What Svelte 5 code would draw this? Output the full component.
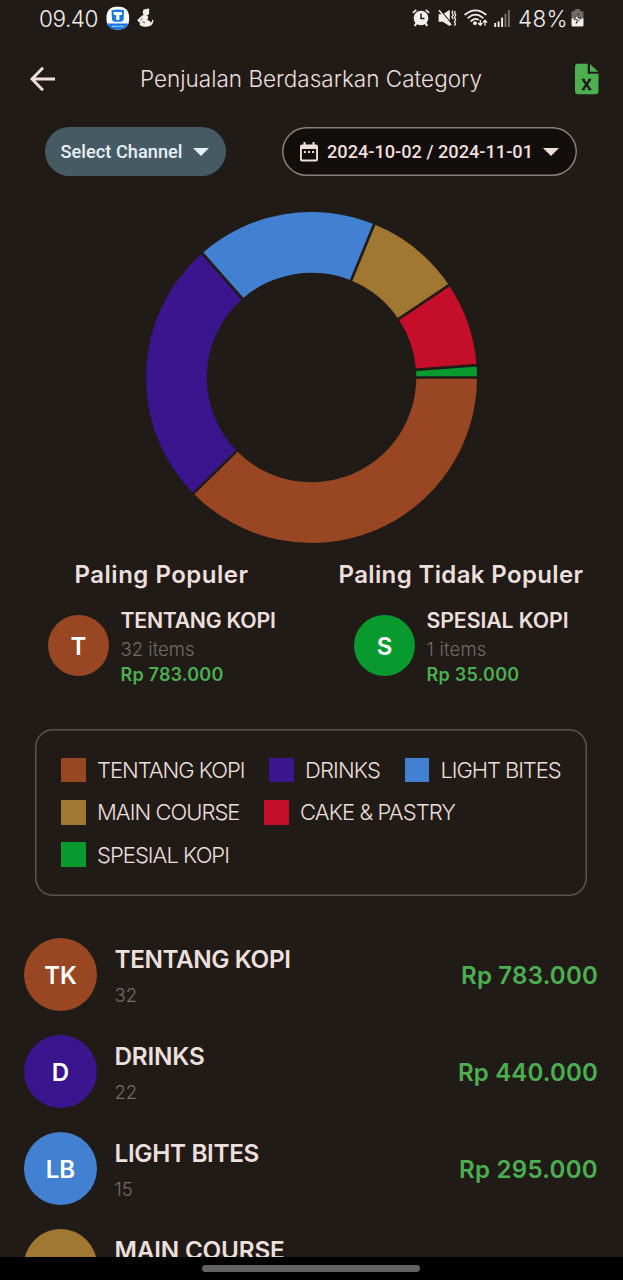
<script>
  const categories = [
    { name: 'TENTANG KOPI', initials: 'TK', qty: 32, total: 'Rp 783.000', color: '#984722', legend: 147.5, row: 176, amount: 137 },
    { name: 'DRINKS', initials: 'D', qty: 22, total: 'Rp 440.000', color: '#3b158d', legend: 75, row: 90, amount: 140 },
    { name: 'LIGHT BITES', initials: 'LB', qty: 15, total: 'Rp 295.000', color: '#4281d2', legend: 120, row: 144.5, amount: 139 },
    { name: 'MAIN COURSE', initials: 'MC', qty: 8, total: '', color: '#a17831', legend: 142.5, row: 170, amount: 0 },
    { name: 'CAKE & PASTRY', initials: 'CP', qty: 7, total: '', color: '#c50e2a', legend: 155, row: 0, amount: 0 },
    { name: 'SPESIAL KOPI', initials: 'SK', qty: 1, total: '', color: '#089a2e', legend: 132, row: 0, amount: 0 }
  ];
  const rows = categories.slice(0, 4);
  const highlights = [
    { title: 'Paling Populer', titleWidth: 174, name: 'TENTANG KOPI', nameWidth: 155, letter: 'T', items: '32 items', itemsWidth: 74, total: 'Rp 783.000', totalWidth: 103, color: '#984722' },
    { title: 'Paling Tidak Populer', titleWidth: 245, name: 'SPESIAL KOPI', nameWidth: 142, letter: 'S', items: '1 items', itemsWidth: 60, total: 'Rp 35.000', totalWidth: 93, color: '#089a2e' }
  ];

  const OUTER = 165.5;
  const INNER = 104.8;
  const sum = categories.reduce((s, c) => s + c.qty, 0);
  const at = (r, a) => `${(r * Math.cos(a)).toFixed(2)} ${(r * Math.sin(a)).toFixed(2)}`;

  let angle = 0;
  const slices = categories.map((c) => {
    const a = angle;
    const b = (angle += (c.qty / sum) * Math.PI * 2);
    const large = b - a > Math.PI ? 1 : 0;
    return {
      color: c.color,
      d: `M${at(OUTER, a)}A${OUTER} ${OUTER} 0 ${large} 1 ${at(OUTER, b)}L${at(INNER, b)}A${INNER} ${INNER} 0 ${large} 0 ${at(INNER, a)}Z`,
      gap: `M${at(INNER - 2, a)}L${at(OUTER + 2, a)}`
    };
  });

  // Tracks a label out or in so that it takes the given width.
  function fit(node, width) {
    const natural = node.getBoundingClientRect().width;
    node.style.letterSpacing = `${(width - natural) / node.textContent.length}px`;
  }
</script>

<div class="screen">
  <div class="status">
    <span class="clock"><span class="t" use:fit={59}>09.40</span></span>
    <svg class="app-badge" viewBox="0 0 24 24" width="24" height="24">
      <defs><clipPath id="badge"><rect x=".5" y=".8" width="22.6" height="22.6" rx="9" /></clipPath></defs>
      <g clip-path="url(#badge)">
        <rect width="24" height="24" fill="#fff" />
        <rect y="17.500" width="24" height="7" fill="#1677e8" />
        <path d="M5.500 4.300q6.300-1.500 12.600 0l-.5 9q-.2 2.400-2.600 2.400h-6.400q-2.400 0-2.600-2.400z" fill="#1677e8" />
        <path d="M7.600 6h8.400v3h-2.600v5h-3.200v-5h-2.600z" fill="#fff" />
        <path d="M6 20.300h12" stroke="#b6d8ff" stroke-width="1.300" stroke-dasharray="1.500 .5" />
      </g>
    </svg>
    <svg class="figure" viewBox="0 0 18 20" width="18" height="20">
      <circle cx="10" cy="4.300" r="3.200" fill="#f1eeec" /><circle cx="12" cy="1.900" r="1.300" fill="#f1eeec" />
      <path d="M7 7q5-.5 5.300 2l-1 3.300q3 .2 3.200 2.300 1.700-.3 1.700-2.800l1.200.3q0 5.200-4.500 6.200-5 1.300-8.200-.5-1.800-1.200-.8-3Q1.100 13.100 1.500 12q.4-1.200 5.500-5z" fill="#f1eeec" />
      <path d="M4.500 12l1.800-1.400M6.500 13.700l2.500 1.200" stroke="#211b18" stroke-width=".8" fill="none" />
    </svg>
    <span class="spacer"></span>
    <svg class="alarm" viewBox="0 0 18 18" width="18" height="18">
      <path d="M.8 3.900L4.300.9M17.200 3.900L13.700.9" stroke="#f1eeec" stroke-width="1.700" />
      <circle cx="9" cy="9" r="7.300" fill="#f1eeec" /><path d="M4.500 14L2.800 17M13.500 14l1.700 3" stroke="#f1eeec" stroke-width="2.200" />
      <path d="M9 4.600V9.500h3.500" fill="none" stroke="#211b18" stroke-width="1.500" />
    </svg>
    <svg class="mute" viewBox="0 0 19 18" width="19" height="18">
      <path d="M.6 5.300h4.200L11.800.8v16.400L4.800 12.700H.6z" fill="#f1eeec" />
      <path d="M2.200 1L13.600 14.600" stroke="#211b18" stroke-width="1.200" /><path d="M1 1.200L13.200 16" stroke="#f1eeec" stroke-width="1.500" />
      <path d="M15 1.500l-1 2 1.200 2.200-1.200 2.300 1.200 2.300M17.500 2l-1 1.800 1.200 2.200-1.200 2.300 1.200 2.300-1.200 2.300 1 2.200-1.200 1.500" fill="none" stroke="#f1eeec" stroke-width="1.300" />
    </svg>
    <svg class="wifi" viewBox="0 0 24 18" width="24" height="18">
      <g fill="none" stroke="#f1eeec" stroke-width="1.700" stroke-linecap="round"><path d="M1.200 5.500Q11.500-2.800 21.800 5.500" /><path d="M4.100 8.800Q11.500 2.600 18.900 8.800" /><path d="M7.200 12Q11 8.500 14 10.500" /></g>
      <circle cx="11" cy="14.200" r="1.900" fill="#f1eeec" />
      <path d="M16.300 11v5.200M14.200 14l2.100 2.300 2.100-2.300M21 16.700V11.500M18.900 13.600l2.100-2.300 2.100 2.300" fill="none" stroke="#f1eeec" stroke-width="1.300" />
    </svg>
    <svg class="signal" viewBox="0 0 16 17" width="16" height="17">
      <path d="M1.200 17v-4M4.600 17v-5.500M8.100 17V7.500" stroke="#f1eeec" stroke-width="1.900" />
      <path d="M11.500 17V3.500M14.900 17V0" stroke="#75716f" stroke-width="1.900" />
    </svg>
    <span class="percent"><span class="t" use:fit={50}>48%</span></span>
    <svg class="battery" viewBox="0 0 13 18" width="13" height="18">
      <path d="M4 0h5v2h2q1.500 0 1.500 1.500V10H.5V3.500Q.5 2 2 2h2z" fill="#6e6a68" /><path d="M.5 9.500h12v6.500q0 1.500-1.500 1.500H2Q.5 17.500.5 16z" fill="#f1eeec" />
      <path d="M7.500 4.500L3 10.500h3.300L5.200 14.500 10 9H6.800z" fill="#fff" stroke="#211b18" stroke-width=".8" />
    </svg>
  </div>

  <header>
    <svg class="back" viewBox="0 0 26 26" width="26" height="26"><path d="M13 1.700L2 13l11 11.300M2.200 13H25" fill="none" stroke="#f0dfdb" stroke-width="2.900" /></svg>
    <h1><span class="t" use:fit={342}>Penjualan Berdasarkan Category</span></h1>
    <svg class="excel" viewBox="0 0 24 32" width="24" height="32">
      <path d="M3 .8H12.700V10.800H23.500V28.300q0 3-3 3H3q-3 0-3-3V3.800q0-3 3-3z" fill="#4caf50" /><path d="M15 .9L23.300 8.800H15z" fill="#4caf50" />
      <path d="M8 16.500L15 26.500M15 16.500L8 26.500" stroke="#211b18" stroke-width="2.300" />
      <path d="M6.800 16.500h3.200M13.200 16.500h3M6.800 26.500h3M13.200 26.500h3.200" stroke="#211b18" stroke-width="1.600" />
    </svg>
  </header>

  <div class="filters">
    <button class="channel"><span class="t" use:fit={122}>Select Channel</span><i class="caret"></i></button>
    <button class="dates">
      <svg viewBox="0 0 18 20" width="18" height="20">
        <path d="M3.500 0h2v2.500h7V0h2v2.500H16q2 0 2 2V17.500q0 2-2 2H2q-2 0-2-2V4.500q0-2 2-2h1.500z" fill="#f0dfdb" /><path d="M1.900 7h14.200v10.500H1.900z" fill="#120e0c" />
        <path d="M3.900 9h2v2h-2zM8 9h2v2H8zM12.100 9h2v2h-2z" fill="#f0dfdb" />
      </svg>
      <span class="t" use:fit={206}>2024-10-02 / 2024-11-01</span><i class="caret"></i>
    </button>
  </div>

  <svg class="donut" viewBox="-166.5 -166.5 333 333" width="333" height="333">
    {#each slices as s}<path d={s.d} fill={s.color} />{/each}
    {#each slices as s}<path d={s.gap} stroke="#211b18" stroke-width="2.700" />{/each}
  </svg>

  <div class="highlights">
    {#each highlights as h}
      <section>
        <h2><span class="t" use:fit={h.titleWidth}>{h.title}</span></h2>
        <div class="best">
          <div class="avatar small" style="background:{h.color}">{h.letter}</div>
          <div class="info">
            <span class="name t" use:fit={h.nameWidth}>{h.name}</span>
            <span class="items t" use:fit={h.itemsWidth}>{h.items}</span>
            <span class="sum t" use:fit={h.totalWidth}>{h.total}</span>
          </div>
        </div>
      </section>
    {/each}
  </div>

  <div class="legend">
    {#each categories as c}
      <div class="key"><i style="background:{c.color}"></i><span class="t" use:fit={c.legend}>{c.name}</span></div>
    {/each}
  </div>

  <div class="list">
    {#each rows as c}
      <div class="row">
        <div class="avatar" style="background:{c.color}">{c.initials}</div>
        <div class="detail">
          <span class="name t" use:fit={c.row}>{c.name}</span>
          {#if c.total}<span class="qty">{c.qty}</span>{/if}
        </div>
        {#if c.total}<span class="amount t" use:fit={c.amount}>{c.total}</span>{/if}
      </div>
    {/each}
  </div>

  <div class="nav"><i></i></div>
</div>

<style>
  :global(body) { background: #211b18; }
  .screen { width: 623px; height: 1280px; overflow: hidden; display: flex; flex-direction: column; background: #211b18; color: #ecdfdc; font-family: Inter, sans-serif; }
  .screen > * { flex: none; }
  .t { display: inline-block; white-space: nowrap; font-kerning: normal; }

  .status { height: 36px; display: flex; align-items: center; box-sizing: border-box; padding: 0 39px 0 39px; color: #f1eeec; font-size: 22.500px; font-weight: 300; }
  .clock { width: 60px; margin-right: 7px; }
  .figure { margin-left: 6px; }
  .spacer { flex: 1; }
  .mute { margin-left: 8px; }
  .wifi { margin-left: 7px; }
  .signal { margin-left: 6px; }
  .percent { width: 50px; margin-left: 8px; }
  .battery { margin-left: 3px; }

  header { height: 84px; margin-top: 1px; display: flex; align-items: center; box-sizing: border-box; padding: 0 24px 0 30px; }
  h1 { margin: 0 auto 0 84px; font-size: 22.500px; font-weight: 300; line-height: 30px; }

  .filters { height: 49px; margin-top: 6px; display: flex; justify-content: space-between; padding: 0 46px 0 45px; }
  button { display: flex; align-items: center; box-sizing: border-box; height: 49px; border: 0; border-radius: 25px; font: 500 18.200px Roboto, sans-serif; }
  .channel { width: 181px; padding: 0 0 0 15.500px; background: #465a64; color: #e7f0f5; }
  .dates { width: 295px; padding: 0 0 0 17.500px; background: #120e0c; color: #f0dfdb; box-shadow: inset 0 0 0 1.500px #8b7f7b; }
  .dates .t { margin-left: 9.500px; }
  .caret { margin-left: 10px; border: solid transparent; border-width: 8px 8px 0; border-top-color: currentColor; }

  .donut { margin: 35px 0 0 145px; }

  .highlights { height: 145px; margin-top: 15px; display: grid; grid-template-columns: 306px 306px; padding-left: 8px; }
  h2 { margin: 0; height: 32px; text-align: center; font-size: 24px; font-weight: 600; line-height: 31px; }
  section:first-child h2 { padding-left: 1px; }
  section:last-child h2 { padding-right: 12px; }
  .best { display: flex; margin: 14px 0 0 40px; align-items: flex-start; }
  .avatar { box-sizing: border-box; width: 73px; height: 73px; padding-top: 1px; border-radius: 50%; display: grid; place-items: center; color: #fff; font-size: 24px; font-weight: 600; }
  .avatar.small { width: 61px; height: 61px; margin-top: 10px; padding-top: 2px; }
  .info { display: flex; flex-direction: column; align-items: flex-start; margin-left: 11.500px; padding-top: 1px; }
  .info .name { font-size: 21.300px; line-height: 28px; font-weight: 600; }
  .info .items { margin-top: 1px; font-size: 18.500px; line-height: 28px; font-weight: 300; color: #716c69; }
  .info .sum { font-size: 18px; line-height: 24px; font-weight: 600; color: #4caf50; }

  .legend { box-sizing: border-box; width: 552px; height: 167px; margin: 25px 0 0 35px; padding: 20px 0 0 26px; box-shadow: inset 0 0 0 1.500px #595451; border-radius: 18px; display: flex; flex-wrap: wrap; align-content: flex-start; column-gap: 24.500px; }
  .key { height: 42.300px; display: flex; align-items: center; font-size: 22px; font-weight: 300; }
  .key i { width: 24.500px; height: 24.500px; margin-right: 11.500px; }

  .list { height: 319px; margin-top: 42px; overflow: hidden; }
  .row { height: 97px; display: flex; align-items: flex-start; padding: 0 25px 0 24px; }
  .detail { display: flex; flex-direction: column; align-items: flex-start; margin-left: 17.500px; flex: 1; }
  .detail .name { font-size: 24.300px; line-height: 32px; font-weight: 600; margin-top: 5px; }
  .qty { font-size: 18.500px; line-height: 24px; font-weight: 300; color: #716c69; margin-top: 8px; }
  .amount { font-size: 24px; line-height: 32px; font-weight: 600; color: #4caf50; margin-top: 22px; }

  .nav { flex: 1; background: #000; display: flex; justify-content: center; }
  .nav i { width: 218px; height: 6.500px; border-radius: 4px; background: #626262; margin: 8px 1px 0 0; }
</style>
